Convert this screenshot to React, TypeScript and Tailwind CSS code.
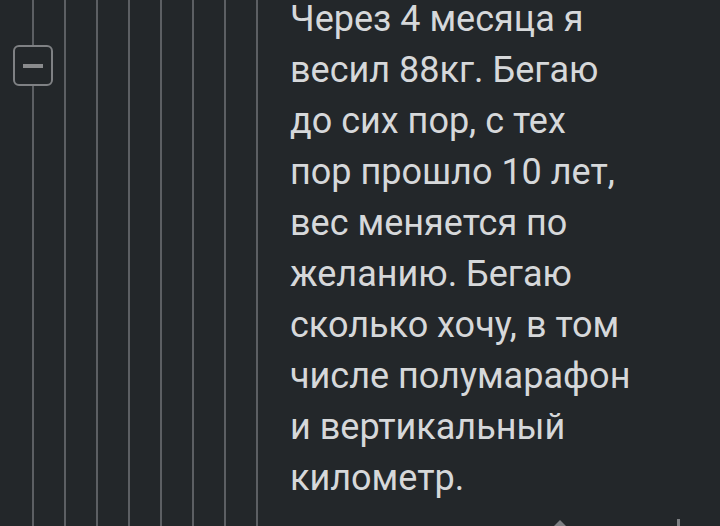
const threadLines = [0, 1, 2, 3, 4, 5, 6, 7];

const commentLines = [
  'Через 4 месяца я',
  'весил 88кг. Бегаю',
  'до сих пор, с тех',
  'пор прошло 10 лет,',
  'вес меняется по',
  'желанию. Бегаю',
  'сколько хочу, в том',
  'числе полумарафон',
  'и вертикальный',
  'километр.',
];

export default function App() {
  return (
    <div className="relative flex h-[526px] w-[720px] overflow-hidden bg-[#23272a] font-['Roboto',sans-serif]">
      {/* Thread indentation guides */}
      <div className="flex shrink-0">
        {threadLines.map((i) => (
          <div
            key={i}
            className={
              i === 0
                ? 'relative h-full w-[34px] border-r-2 border-[#5c5f63]'
                : 'h-full w-[32px] border-r-2 border-[#5c5f63]'
            }
          >
            {i === 0 && (
              <button
                type="button"
                className="absolute left-[13px] top-[45px] flex h-[41px] w-[40px] items-center justify-center rounded-[6px] border-2 border-[#7f8184] bg-[#23272a]"
              >
                <span className="block h-[4px] w-[20px] bg-[#8a8b8d]" />
              </button>
            )}
          </div>
        ))}
      </div>

      {/* Comment body */}
      <div className="pl-8">
        <p className="mt-[-6px] whitespace-nowrap text-[36px] leading-[51px] text-[#d6d8da]">
          {commentLines.map((line, i) => (
            <span key={i} className="block">
              {line}
            </span>
          ))}
        </p>
      </div>

      {/* Action icons peeking at the bottom edge */}
      <div className="absolute left-[553px] top-[520px] h-0 w-0 border-x-[7px] border-b-[7px] border-x-transparent border-b-[#7d7f82]" />
      <div className="absolute left-[677px] top-[519px] h-[8px] w-[3px] bg-[#7d7f82]" />
    </div>
  );
}
